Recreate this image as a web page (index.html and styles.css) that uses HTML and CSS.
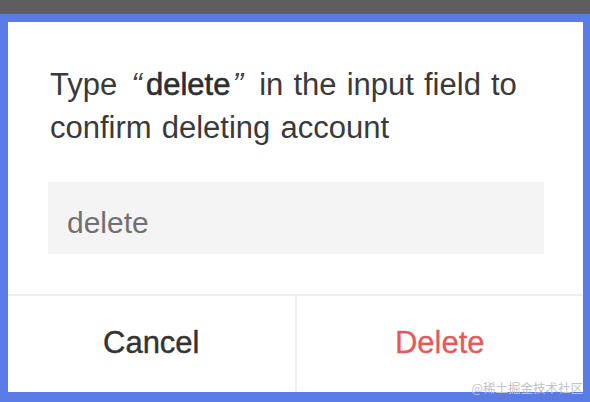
FILE: index.html
```html
<!DOCTYPE html>
<html>
<head>
<meta charset="utf-8">
<link rel="stylesheet" href="styles.css">
</head>
<body>
<div class="screen">
  <div class="dialog">
    <div class="body">
      <p class="msg">Type <span class="q lq">“</span><b>delete</b><span class="q rq">”</span> in the input field to confirm deleting account</p>
      <div class="field">delete</div>
    </div>
    <div class="actions">
      <div class="btn cancel">Cancel</div>
      <div class="btn danger">Delete</div>
    </div>
  </div>
  <div class="watermark">@稀土掘金技术社区</div>
</div>
</body>
</html>
```

FILE: styles.css
```css
html, body {
  margin: 0;
  padding: 0;
}
body {
  background: #5e5e60;
  width: 590px;
  height: 402px;
  overflow: hidden;
  font-family: "Liberation Sans", "Noto Sans CJK SC", sans-serif;
}
.screen {
  position: relative;
  margin-top: 14px;
  height: 388px;
  box-sizing: border-box;
  background: #5a7ae6;
  padding: 8px 7px 10px 8px;
}
.dialog {
  background: #fff;
  height: 100%;
  display: flex;
  flex-direction: column;
}
.body {
  flex: 1;
  padding: 41px 20px 0 42px;
}
.msg {
  margin: 0;
  font-size: 31px;
  line-height: 43px;
  color: #3a3a3a;
  word-spacing: 1.5px;
}
.msg b {
  font-weight: 400;
  color: #2e2e2e;
  -webkit-text-stroke: 0.6px #2e2e2e;
}
.q {
  font-size: 32px;
  color: #444;
  font-style: italic;
}
.lq {
  margin-left: 4px;
  margin-right: 4px;
}
.rq {
  margin-left: 2px;
  margin-right: 6px;
}
.field {
  margin-top: 33px;
  margin-left: -2px;
  width: 496px;
  height: 72px;
  box-sizing: border-box;
  background: #f4f4f4;
  padding: 9px 19px 0;
  display: flex;
  align-items: center;
  font-size: 30px;
  color: #707070;
}
.actions {
  height: 96px;
  border-top: 2px solid #efefef;
  display: flex;
}
.btn {
  flex: 1;
  display: flex;
  align-items: center;
  justify-content: center;
  font-size: 31px;
  padding-bottom: 2px;
}
.cancel {
  color: #333;
  -webkit-text-stroke: 0.4px #333;
  border-right: 2px solid #f0f0f0;
}
.danger {
  color: #e45a5a;
  -webkit-text-stroke: 0.3px #e45a5a;
}
.watermark {
  position: absolute;
  right: 7px;
  bottom: 7px;
  font-size: 12.5px;
  color: #c4c4c4;
  font-family: "Noto Sans CJK SC", sans-serif;
  line-height: 14px;
}
```
